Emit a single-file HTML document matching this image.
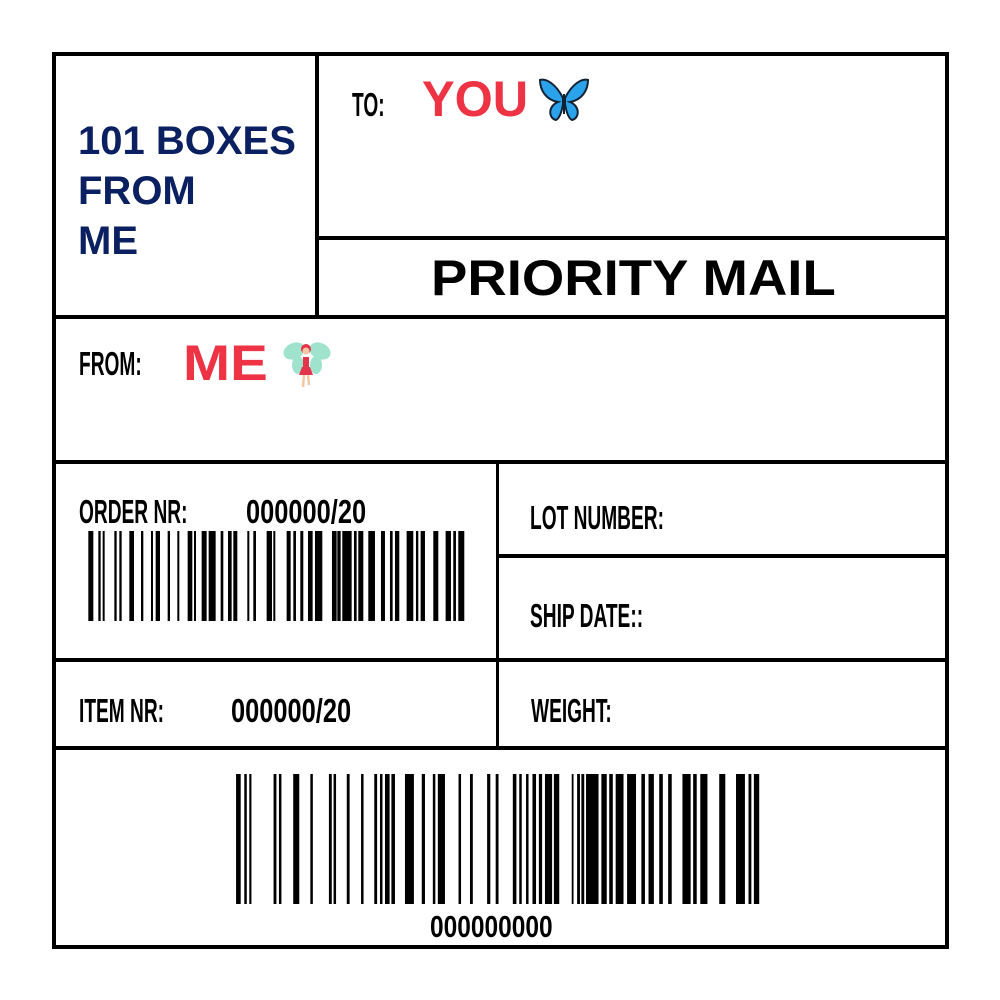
<!DOCTYPE html>
<html><head><meta charset="utf-8"><style>
body{margin:0;width:1000px;height:1000px;background:#fff;position:relative;overflow:hidden}
.l{position:absolute;background:#000}
.t{position:absolute;font-family:"Liberation Sans Narrow","Liberation Sans",sans-serif;font-weight:bold;font-size:33px;line-height:33px;color:#000;transform:scaleX(0.58);transform-origin:left top;white-space:nowrap}
.d{transform:scaleX(0.77)}
.h{position:absolute;font-family:"Liberation Sans",sans-serif;font-weight:bold;white-space:nowrap;transform-origin:left top}
</style></head><body>
<div class="l" style="left:52px;top:52px;width:897px;height:4px"></div>
<div class="l" style="left:52px;top:945px;width:897px;height:4px"></div>
<div class="l" style="left:52px;top:52px;width:4px;height:897px"></div>
<div class="l" style="left:945px;top:52px;width:4px;height:897px"></div>
<div class="l" style="left:315px;top:52px;width:4px;height:266px"></div>
<div class="l" style="left:315px;top:236px;width:634px;height:4px"></div>
<div class="l" style="left:52px;top:315px;width:897px;height:4px"></div>
<div class="l" style="left:52px;top:460px;width:897px;height:4px"></div>
<div class="l" style="left:496px;top:460px;width:3px;height:286px"></div>
<div class="l" style="left:498px;top:554px;width:451px;height:4px"></div>
<div class="l" style="left:52px;top:658px;width:897px;height:4px"></div>
<div class="l" style="left:52px;top:746px;width:897px;height:4px"></div>

<div class="h" style="left:78px;top:116px;font-size:40px;line-height:50px;color:#0a2060;transform:scaleX(1.0)">101 BOXES<br>FROM<br>ME</div>
<div class="t" style="left:352px;top:88px">TO:</div>
<div class="h" style="left:422px;top:74px;font-size:50px;line-height:50px;color:#ee3344;transform:scaleX(0.98)">YOU</div>
<svg style="position:absolute;left:538px;top:78px" width="52" height="44" viewBox="0 0 52 44">
<path d="M25 20 C18 6 8 0 2 2 C2 12 8 22 20 24 C10 28 10 40 18 42 C22 40 24 32 25 26Z" fill="#2aa3ec" stroke="#123" stroke-width="2"/>
<path d="M27 20 C34 6 44 0 50 2 C50 12 44 22 32 24 C42 28 42 40 34 42 C30 40 28 32 27 26Z" fill="#2aa3ec" stroke="#123" stroke-width="2"/>
<rect x="25" y="16" width="2" height="20" fill="#123"/></svg>
<div class="h" style="left:431px;top:256px;font-size:50px;line-height:44px;color:#000;transform:scaleX(1.09)">PRIORITY MAIL</div>

<div class="t" style="left:79px;top:347px">FROM:</div>
<div class="h" style="left:183px;top:338px;font-size:50px;line-height:50px;color:#ee3344;transform:scaleX(1.13)">ME</div>
<svg style="position:absolute;left:282px;top:337px" width="50" height="52" viewBox="0 0 50 52">
<ellipse cx="12" cy="14" rx="11" ry="8" fill="#9fe3cc" transform="rotate(-25 12 14)"/>
<ellipse cx="38" cy="14" rx="11" ry="8" fill="#9fe3cc" transform="rotate(25 38 14)"/>
<ellipse cx="16" cy="28" rx="6" ry="9" fill="#9fe3cc"/><ellipse cx="34" cy="28" rx="6" ry="9" fill="#9fe3cc"/>
<circle cx="24" cy="12" r="5" fill="#e4344a"/><circle cx="24" cy="14" r="3.5" fill="#f1c8a5"/>
<path d="M20 30 L28 30 L31 38 L17 38Z" fill="#e4344a"/><rect x="21" y="20" width="6" height="10" fill="#e4344a"/>
<path d="M22 38 L21 50 M26 38 L27 48" stroke="#f1c8a5" stroke-width="2.5"/></svg>

<div class="t" style="left:79px;top:495px">ORDER NR:</div>
<div class="t d" style="left:246px;top:495px">000000/20</div>
<svg style="position:absolute;left:0;top:0" width="1000" height="1000">
<g transform="translate(80,0) scale(0.3333,1)">
<path d="M25 531h15v90h-15zM55 531h7v90h-7zM68 531h6v90h-6zM103 531h7v90h-7zM118 531h7v90h-7zM148 531h14v90h-14zM183 531h7v90h-7zM213 531h6v90h-6zM227 531h13v90h-13zM263 531h7v90h-7zM292 531h6v90h-6zM323 531h14v90h-14zM342 531h6v90h-6zM365 531h15v90h-15zM386 531h21v90h-21zM422 531h8v90h-8zM444 531h11v90h-11zM460 531h12v90h-12zM502 531h6v90h-6zM520 531h8v90h-8zM560 531h16v90h-16zM580 531h6v90h-6zM620 531h12v90h-12zM640 531h8v90h-8zM661 531h9v90h-9zM684 531h14v90h-14zM705 531h22v90h-22zM756 531h14v90h-14zM772 531h10v90h-10zM787 531h28v90h-28zM822 531h8v90h-8zM835 531h15v90h-15zM865 531h20v90h-20zM903 531h12v90h-12zM930 531h8v90h-8zM945 531h13v90h-13zM980 531h20v90h-20zM1008 531h7v90h-7zM1022 531h13v90h-13zM1060 531h15v90h-15zM1097 531h16v90h-16zM1120 531h8v90h-8zM1135 531h18v90h-18z"/>
</g>
<g transform="translate(220,0) scale(0.3571,1)">
<path d="M45 774h13v130h-13zM68 774h7v130h-7zM82 774h6v130h-6zM150 774h8v130h-8zM165 774h7v130h-7zM205 774h17v130h-17zM253 774h7v130h-7zM305 774h8v130h-8zM318 774h7v130h-7zM355 774h8v130h-8zM395 774h7v130h-7zM432 774h8v130h-8zM448 774h7v130h-7zM462 774h13v130h-13zM480 774h10v130h-10zM518 774h25v130h-25zM565 774h9v130h-9zM596 774h7v130h-7zM610 774h20v130h-20zM668 774h7v130h-7zM700 774h8v130h-8zM748 774h9v130h-9zM772 774h8v130h-8zM820 774h10v130h-10zM838 774h7v130h-7zM857 774h7v130h-7zM875 774h10v130h-10zM893 774h9v130h-9zM910 774h20v130h-20zM935 774h15v130h-15zM985 774h5v130h-5zM1000 774h8v130h-8zM1012 774h8v130h-8zM1025 774h35v130h-35zM1068 774h15v130h-15zM1090 774h10v130h-10zM1108 774h22v130h-22zM1140 774h25v130h-25zM1180 774h10v130h-10zM1200 774h15v130h-15zM1230 774h10v130h-10zM1255 774h10v130h-10zM1295 774h23v130h-23zM1325 774h10v130h-10zM1345 774h20v130h-20zM1398 774h17v130h-17zM1445 774h25v130h-25zM1480 774h8v130h-8zM1495 774h15v130h-15z"/>
</g></svg>

<div class="t" style="left:530px;top:501px">LOT NUMBER:</div>
<div class="t" style="left:530px;top:599px">SHIP DATE::</div>
<div class="t" style="left:79px;top:694px">ITEM NR:</div>
<div class="t d" style="left:231px;top:694px">000000/20</div>
<div class="t" style="left:531px;top:694px">WEIGHT:</div>
<div class="t" style="left:430px;top:910px;font-size:31px;transform:scaleX(0.79)">000000000</div>
</body></html>
